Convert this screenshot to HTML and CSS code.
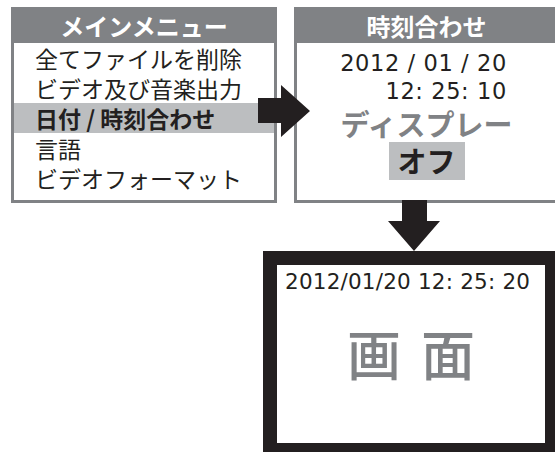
FILE: index.html
```html
<!DOCTYPE html>
<html lang="ja">
<head>
  <meta charset="UTF-8" />
  <title>時刻合わせ</title>
  <link rel="stylesheet" href="styles.css">
</head>
<body>
  <div class="diagram">
    <div class="top-row">
      <div class="panel menu">
        <div class="panel-title">メインメニュー</div>
        <ul class="menu-list">
          <li>全てファイルを削除</li>
          <li>ビデオ及び音楽出力</li>
          <li class="selected">日付 / 時刻合わせ</li>
          <li>言語</li>
          <li>ビデオフォーマット</li>
        </ul>
      </div>

      <div class="panel clock">
        <div class="panel-title">時刻合わせ</div>
        <div class="clock-body">
          <div class="datetime">
            <div>2012 / 01 / 20</div>
            <div>12: 25: 10</div>
          </div>
          <div class="option-label">ディスプレー</div>
          <div class="option-value">オフ</div>
        </div>
      </div>
    </div>

    <div class="screen">
      <div class="stamp">2012/01/20 12: 25: 20</div>
      <div class="screen-label"><span>画</span><span>面</span></div>
    </div>

    <!-- arrows drawn over the panels -->
    <svg class="arrows" width="555" height="452" viewBox="0 0 555 452">
      <polygon points="258,98 281,98 281,85 310,111 281,137 281,123 258,123" />
      <polygon points="402,200 427,200 427,221 440,221 414,251 388,221 402,221" />
    </svg>
  </div>
</body>
</html>
```

FILE: styles.css
```css
* {
  box-sizing: border-box;
}

html, body {
  margin: 0;
  padding: 0;
  background: #fff;
  overflow: hidden;
}

body {
  font-family: "Noto Sans CJK JP", "Noto Sans", sans-serif;
  color: #231f20;
}

.diagram {
  position: relative;
  width: 555px;
  height: 452px;
  padding: 7px 0 0 11px;
}

.top-row {
  display: flex;
  gap: 17px;
}

.panel {
  height: 196px;
  border: 3px solid #808285;
  flex-shrink: 0;
}

.menu {
  width: 266px;
}

.clock {
  width: 265px;
}

.panel-title {
  height: 33px;
  margin-top: -3px;
  padding-top: 3px;
  box-sizing: content-box;
  background: #808285;
  color: #fff;
  font-weight: 700;
  font-size: 24px;
  line-height: 31px;
  text-align: center;
}

.menu-list {
  list-style: none;
  margin: 0;
  padding: 0;
}

.menu-list li {
  height: 30px;
  line-height: 30px;
  font-size: 23px;
  padding-left: 21px;
  white-space: nowrap;
}

.menu-list li.selected {
  background: #bcbec0;
  font-weight: 700;
}

.clock-body {
  display: flex;
  flex-direction: column;
  align-items: center;
  padding-top: 6px;
}

.datetime {
  font-family: "DejaVu Sans", "Noto Sans CJK JP", sans-serif;
  text-align: right;
  font-size: 22.5px;
  line-height: 28px;
  letter-spacing: 0.6px;
  margin-right: 6px;
}

.option-label {
  font-size: 29px;
  font-weight: 700;
  color: #808285;
  line-height: 34px;
  margin-top: 1px;
}

.option-value {
  margin-top: 2px;
  width: 76px;
  height: 38px;
  background: #bcbec0;
  font-size: 29px;
  font-weight: 700;
  line-height: 37px;
  text-align: center;
}

.screen {
  margin: 48px 0 0 252px;
  width: 296px;
  height: 206px;
  border: 14px solid #231f20;
}

.stamp {
  font-family: "DejaVu Sans", "Noto Sans CJK JP", sans-serif;
  font-size: 21.5px;
  line-height: 30px;
  letter-spacing: 0.2px;
  padding: 2px 0 0 8px;
  white-space: nowrap;
}

.screen-label {
  display: flex;
  justify-content: center;
  gap: 20px;
  margin-top: 26px;
  font-size: 54px;
  font-weight: 500;
  line-height: 60px;
  color: #808285;
}

.arrows {
  position: absolute;
  left: 0;
  top: 0;
  pointer-events: none;
}

.arrows polygon {
  fill: #231f20;
}
```
